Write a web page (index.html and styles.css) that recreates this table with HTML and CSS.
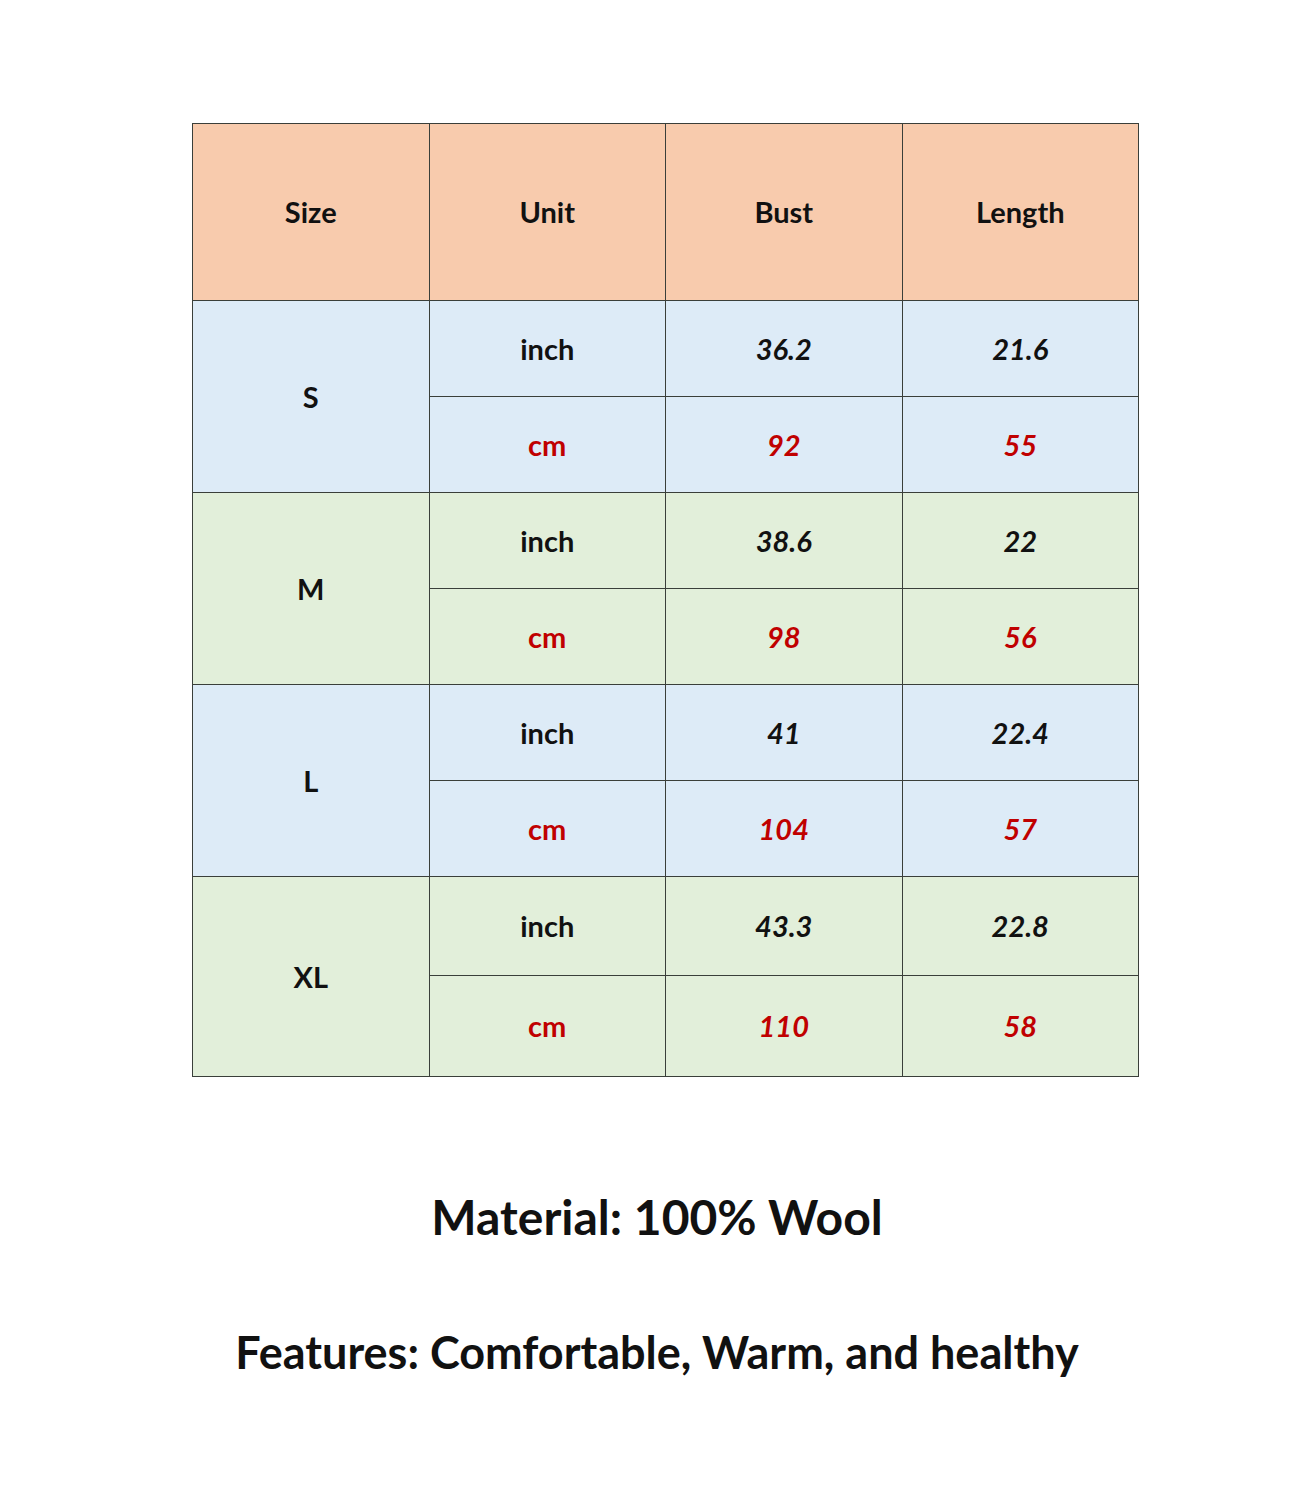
FILE: index.html
```html
<!DOCTYPE html>
<html>
<head>
<meta charset="utf-8">
<link rel="stylesheet" href="styles.css">
</head>
<body>
<table class="size-table">
  <colgroup><col class="c1"><col class="c2"><col class="c3"><col class="c4"></colgroup>
  <thead>
    <tr class="head"><th>Size</th><th>Unit</th><th>Bust</th><th>Length</th></tr>
  </thead>
  <tbody>
    <tr class="blue r1"><td rowspan="2" class="size">S</td><td class="unit">inch</td><td class="num">36.2</td><td class="num">21.6</td></tr>
    <tr class="blue r2"><td class="unit red">cm</td><td class="num red">92</td><td class="num red">55</td></tr>
    <tr class="green r1"><td rowspan="2" class="size">M</td><td class="unit">inch</td><td class="num">38.6</td><td class="num">22</td></tr>
    <tr class="green r2"><td class="unit red">cm</td><td class="num red">98</td><td class="num red">56</td></tr>
    <tr class="blue r1"><td rowspan="2" class="size">L</td><td class="unit">inch</td><td class="num">41</td><td class="num">22.4</td></tr>
    <tr class="blue r2"><td class="unit red">cm</td><td class="num red">104</td><td class="num red">57</td></tr>
    <tr class="green r1 tall"><td rowspan="2" class="size">XL</td><td class="unit">inch</td><td class="num">43.3</td><td class="num">22.8</td></tr>
    <tr class="green r2 tall2"><td class="unit red">cm</td><td class="num red">110</td><td class="num red">58</td></tr>
  </tbody>
</table>
<p class="material">Material: 100% Wool</p>
<p class="features">Features: Comfortable, Warm, and healthy</p>
</body>
</html>
```
FILE: styles.css
```css
html, body {
  margin: 0;
  padding: 0;
  background: #ffffff;
}
body {
  font-family: Lato, "Open Sans", sans-serif;
  color: #111111;
}
.size-table {
  border-collapse: collapse;
  margin: 123px 0 0 192px;
  width: 947px;
  table-layout: fixed;
}
.size-table th,
.size-table td {
  border: 1px solid #3a3f3a;
  text-align: center;
  vertical-align: middle;
  padding: 0;
  font-size: 29px;
  font-weight: 700;
  line-height: 34px;
}
.c1, .c2, .c3, .c4 { width: 25%; }
.head th {
  background: #f8cbad;
  height: 176px;
  font-weight: 700;
}
.blue td { background: #ddebf7; }
.green td { background: #e2efda; }
.r1 td, .r2 td { height: 95px; }
.tall td { height: 98px; }
.tall2 td { height: 100px; }
.unit { font-weight: 700; }
.num { font-style: italic; }
.red { color: #c00000; }
.size { font-weight: 700; }
.material {
  margin: 112px 0 0 0;
  text-align: center;
  font-size: 48px;
  font-weight: 700;
  line-height: 56px;
}
.features {
  margin: 80px 0 0 0;
  text-align: center;
  font-size: 45px;
  font-weight: 700;
  line-height: 54px;
}
```
